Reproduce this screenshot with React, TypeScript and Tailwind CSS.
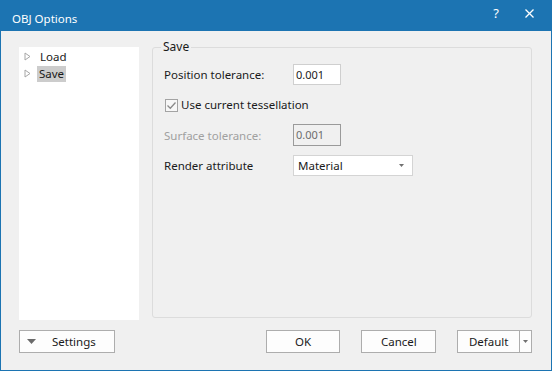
import React from 'react';

const font = { fontFamily: '"Noto Sans", "Open Sans", sans-serif' };

const TreeArrow: React.FC = () => (
    <svg width="7" height="9" viewBox="0 0 7 9" className="shrink-0">
        <path d="M1 1 L6 4.5 L1 8 Z" fill="none" stroke="#a6a6a6" strokeWidth="1" />
    </svg>
);

const DownTri: React.FC<{ color?: string }> = ({ color = '#606060' }) => (
    <svg width="9" height="5" viewBox="0 0 9 5">
        <path d="M0 0 H9 L4.5 5 Z" fill={color} />
    </svg>
);

const Button: React.FC<{ label: string; className?: string }> = ({ label, className = '' }) => (
    <div className={`h-[23px] flex items-center justify-center border border-[#adadad] bg-[#fdfdfd] text-[#1a1a1a] ${className}`}>
        {label}
    </div>
);

export default function App() {
    return (
        <div style={font} className="w-[552px] h-[371px] flex flex-col bg-[#1c74b2] text-[11px] leading-[16px] overflow-hidden">
            {/* title bar */}
            <div className="h-[31px] shrink-0 flex items-center text-white pl-[12px]">
                <span className="mt-[7px] text-[11.5px]">OBJ Options</span>
                <div className="ml-auto flex items-center">
                    <span className="w-[20px] text-center text-[13px] -mt-[6px]">?</span>
                    <svg width="9" height="9" viewBox="0 0 9 9" className="ml-[19px] mr-[18px] -mt-[5px]">
                        <path d="M0.5 0.5 L8.5 8.5 M8.5 0.5 L0.5 8.5" stroke="white" strokeWidth="1.3" />
                    </svg>
                </div>
            </div>

            {/* body */}
            <div className="flex-1 flex flex-col bg-[#f0f0f0] mx-[1px] mb-[1px] pl-[18px] pr-[19px] pt-[16px]">
                <div className="flex gap-[13px] h-[273px]">
                    {/* tree */}
                    <div className="w-[120px] bg-white pt-[1px] text-[#1a1a1a] text-[11.5px]">
                        <div className="h-[17px] flex items-center pl-[5px]">
                            <TreeArrow />
                            <span className="ml-[7px] px-[2px]">Load</span>
                        </div>
                        <div className="h-[17px] flex items-center pl-[5px]">
                            <TreeArrow />
                            <span className="ml-[6px] px-[2px] bg-[#cccccc] leading-[16px]">Save</span>
                        </div>
                    </div>

                    {/* group box */}
                    <div className="flex-1 h-[271px] border border-[#dcdcdc] rounded-[3px] flex flex-col pl-[11px] text-[#1a1a1a]">
                        <span className="self-start -mt-[9px] -ml-[3px] px-[2px] bg-[#f0f0f0] text-[12px]">Save</span>

                        <div className="mt-[9px] h-[21px] flex items-center">
                            <span className="w-[129px] text-[11.5px] mt-[1px]">Position tolerance:</span>
                            <div className="w-[48px] h-[21px] bg-white border border-[#cfcfcf] flex items-center pl-[2px]">0.001</div>
                        </div>

                        <div className="mt-[9px] h-[22px] flex items-center">
                            <div className="w-[13px] h-[13px] border border-[#a3a3a3] bg-[#f7f7f7] flex items-center justify-center ml-[1px]">
                                <svg width="11" height="11" viewBox="0 0 11 11">
                                    <path d="M1.5 5.5 L4.3 8.3 L9.5 2.5" fill="none" stroke="#8a8a8a" strokeWidth="1.3" />
                                </svg>
                            </div>
                            <span className="ml-[3px] text-[11.5px]">Use current tessellation</span>
                        </div>

                        <div className="mt-[8px] h-[22px] flex items-center">
                            <span className="w-[129px] text-[#a0a0a0] text-[11.5px] mt-[1px]">Surface tolerance:</span>
                            <div className="w-[48px] h-[22px] bg-[#f0f0f0] border border-[#9a9a9a] text-[#6d6d6d] flex items-center pl-[2px]">0.001</div>
                        </div>

                        <div className="mt-[9px] h-[21px] flex items-center">
                            <span className="w-[129px] text-[11.5px] mt-[1px]">Render attribute</span>
                            <div className="w-[120px] h-[21px] bg-white border border-[#d4d4d4] flex items-center pl-[4px] pr-[8px] text-[11.5px]">
                                <span className="flex-1">Material</span>
                                <svg width="5" height="3" viewBox="0 0 5 3"><path d="M0 0 H5 L2.5 3 Z" fill="#707070" /></svg>
                            </div>
                        </div>
                    </div>
                </div>

                {/* buttons */}
                <div className="mt-[10px] flex items-center text-[11.5px]">
                    <div className="w-[96px] h-[23px] flex items-center border border-[#adadad] bg-[#fdfdfd] text-[#1a1a1a] pl-[7px]">
                        <DownTri color="#6a6a6a" />
                        <span className="flex-1 text-center pr-[2px]">Settings</span>
                    </div>
                    <Button label="OK" className="w-[75px] ml-[151px]" />
                    <Button label="Cancel" className="w-[75px] ml-[21px]" />
                    <div className="ml-[21px] w-[75px] h-[23px] flex border border-[#adadad] bg-[#fdfdfd] text-[#1a1a1a]">
                        <span className="flex-1 flex items-center justify-center border-r border-[#adadad]">Default</span>
                        <span className="w-[11px] flex items-center justify-center">
                            <svg width="5" height="3" viewBox="0 0 5 3"><path d="M0 0 H5 L2.5 3 Z" fill="#707070" /></svg>
                        </span>
                    </div>
                </div>
            </div>
        </div>
    );
}
